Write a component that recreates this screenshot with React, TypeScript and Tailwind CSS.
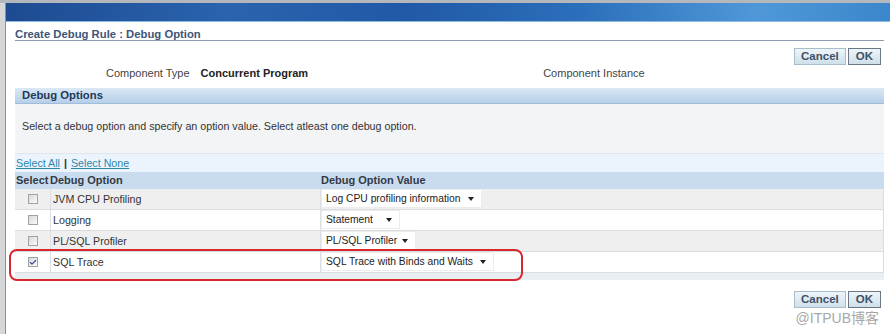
import { Check } from 'lucide-react';

const FONT = { fontFamily: '"Liberation Sans", Arial, sans-serif' };

type Row = { name: string; value: string; width: string; checked?: boolean; shade: boolean };

const rows: Row[] = [
  { name: 'JVM CPU Profiling', value: 'Log CPU profiling information', width: 'w-[161px]', shade: true },
  { name: 'Logging', value: 'Statement', width: 'w-[79px]', shade: false },
  { name: 'PL/SQL Profiler', value: 'PL/SQL Profiler', width: 'w-[95px]', shade: true },
  { name: 'SQL Trace', value: 'SQL Trace with Binds and Waits', width: 'w-[173px]', checked: true, shade: false },
];

function Buttons() {
  return (
    <div className="flex justify-end gap-[2px] pr-[3px]">
      <button className="h-[17px] px-[6px] border border-[#a7bccc] bg-[linear-gradient(180deg,#eef5f9,#cfe0ea)] text-[11.5px] font-bold leading-[15px] text-[#3f5068]">
        Cancel
      </button>
      <button className="h-[17px] px-[7px] border border-[#6b7884] bg-[linear-gradient(180deg,#eef5f9,#cfe0ea)] text-[11.5px] font-bold leading-[15px] text-[#3f5068]">
        OK
      </button>
    </div>
  );
}

function Checkbox({ checked }: { checked?: boolean }) {
  return (
    <span className="flex h-[10px] w-[10px] items-center justify-center border border-[#9ea3a8] bg-[linear-gradient(135deg,#d6d8db,#fbfbfb)]">
      {checked && <Check size={9} strokeWidth={3.5} className="text-[#3b4a9e]" />}
    </span>
  );
}

function Select({ value, width }: { value: string; width: string }) {
  return (
    <div className={`flex h-[19px] shrink-0 items-center justify-between whitespace-nowrap border border-[#ececec] bg-white pl-[4px] pr-[7px] ${width}`}>
      <span className="text-[10.3px] text-[#222]">{value}</span>
      <span className="h-0 w-0 border-x-[3px] border-t-[4px] border-x-transparent border-t-[#222]" />
    </div>
  );
}

export default function App() {
  return (
    <div className="flex h-[334px] w-[890px] flex-col overflow-hidden bg-white" style={FONT}>
      <div className="h-[3px] bg-[#b4b8bc]" />
      <div className="flex flex-1">
        <div className="w-[6px] border-r border-[#8d9094] bg-[#d4d6d8]" />
        <div className="flex flex-1 flex-col">
          <div className="h-[19px] border-b border-[#8db9e0] bg-[linear-gradient(90deg,#1d4b92_0%,#2a63ae_25%,#2159a6_45%,#2b6fba_65%,#4f98d8_85%,#3b86cc_100%)]" />

          <div className="flex flex-col pl-[9px] pr-[6px]">
            <div className="border-b border-[#8a9bb0] pt-[6px] text-[11.3px] font-bold leading-[12px] text-[#3d5578]">
              Create Debug Rule : Debug Option
            </div>

            <div className="pt-[7px]">
              <Buttons />
            </div>

            <div className="flex items-center whitespace-nowrap pt-[1px] text-[11px] leading-[14px]">
              <span className="ml-[91px] text-[#444]">Component Type</span>
              <span className="ml-[11px] font-bold text-[#222]">Concurrent Program</span>
              <span className="ml-[235px] text-[#444]">Component Instance</span>
            </div>

            <div className="mt-[8px] flex h-[16px] items-center border-b border-[#9fbcd8] bg-[linear-gradient(180deg,#dbe8f4,#b6cfe8)] pl-[7px] text-[11.3px] font-bold text-[#22395a]">
              Debug Options
            </div>

            <div className="flex h-[49px] items-center bg-[#f3f4f6] pb-[5px] pl-[7px] text-[10.7px] text-[#333]">
              Select a debug option and specify an option value. Select atleast one debug option.
            </div>

            <div className="flex h-[19px] items-end border-t border-[#dfe7ee] bg-[#ebf4fc] pb-[1px] pl-[1px] text-[10.7px]">
              <span className="text-[#2f86ad] underline">Select All</span>
              <span className="mx-[4px] font-bold text-[#333]">|</span>
              <span className="text-[#2f86ad] underline">Select None</span>
            </div>

            <div className="flex h-[17px] items-center whitespace-nowrap bg-[#c9dcef] text-[11px] font-bold text-[#333a44]">
              <span className="w-[35px] pl-[1px]">Select</span>
              <span className="w-[271px]">Debug Option</span>
              <span>Debug Option Value</span>
            </div>

            {rows.map((r) => (
              <div
                key={r.name}
                className={`flex h-[21px] items-center border-b border-r border-[#d9dde2] ${r.shade ? 'bg-[#efeff0]' : 'bg-white'}`}
              >
                <div className="flex w-[35px] justify-center">
                  <Checkbox checked={r.checked} />
                </div>
                <div className="flex h-full w-[270px] items-center whitespace-nowrap border-l border-[#dcdfe3] pl-[2px] text-[10.7px] text-[#333]">
                  {r.name}
                </div>
                <div className="h-full border-l border-[#dcdfe3]">
                  <Select value={r.value} width={r.width} />
                </div>
              </div>
            ))}

            <div className="relative h-[7px] bg-[#e9eef3]">
              <div className="pointer-events-none absolute left-[-6px] top-[-24px] h-[32px] w-[514px] rounded-[8px] border-2 border-[#d9272e]" />
            </div>

            <div className="pt-[11px]">
              <Buttons />
            </div>
            <div
              className="flex justify-end pr-[5px] text-[14px] text-[#a8a8a8]"
              style={{ fontFamily: '"Liberation Sans", "Noto Sans CJK SC", sans-serif' }}
            >
              @ITPUB博客
            </div>
          </div>
        </div>
      </div>
    </div>
  );
}
